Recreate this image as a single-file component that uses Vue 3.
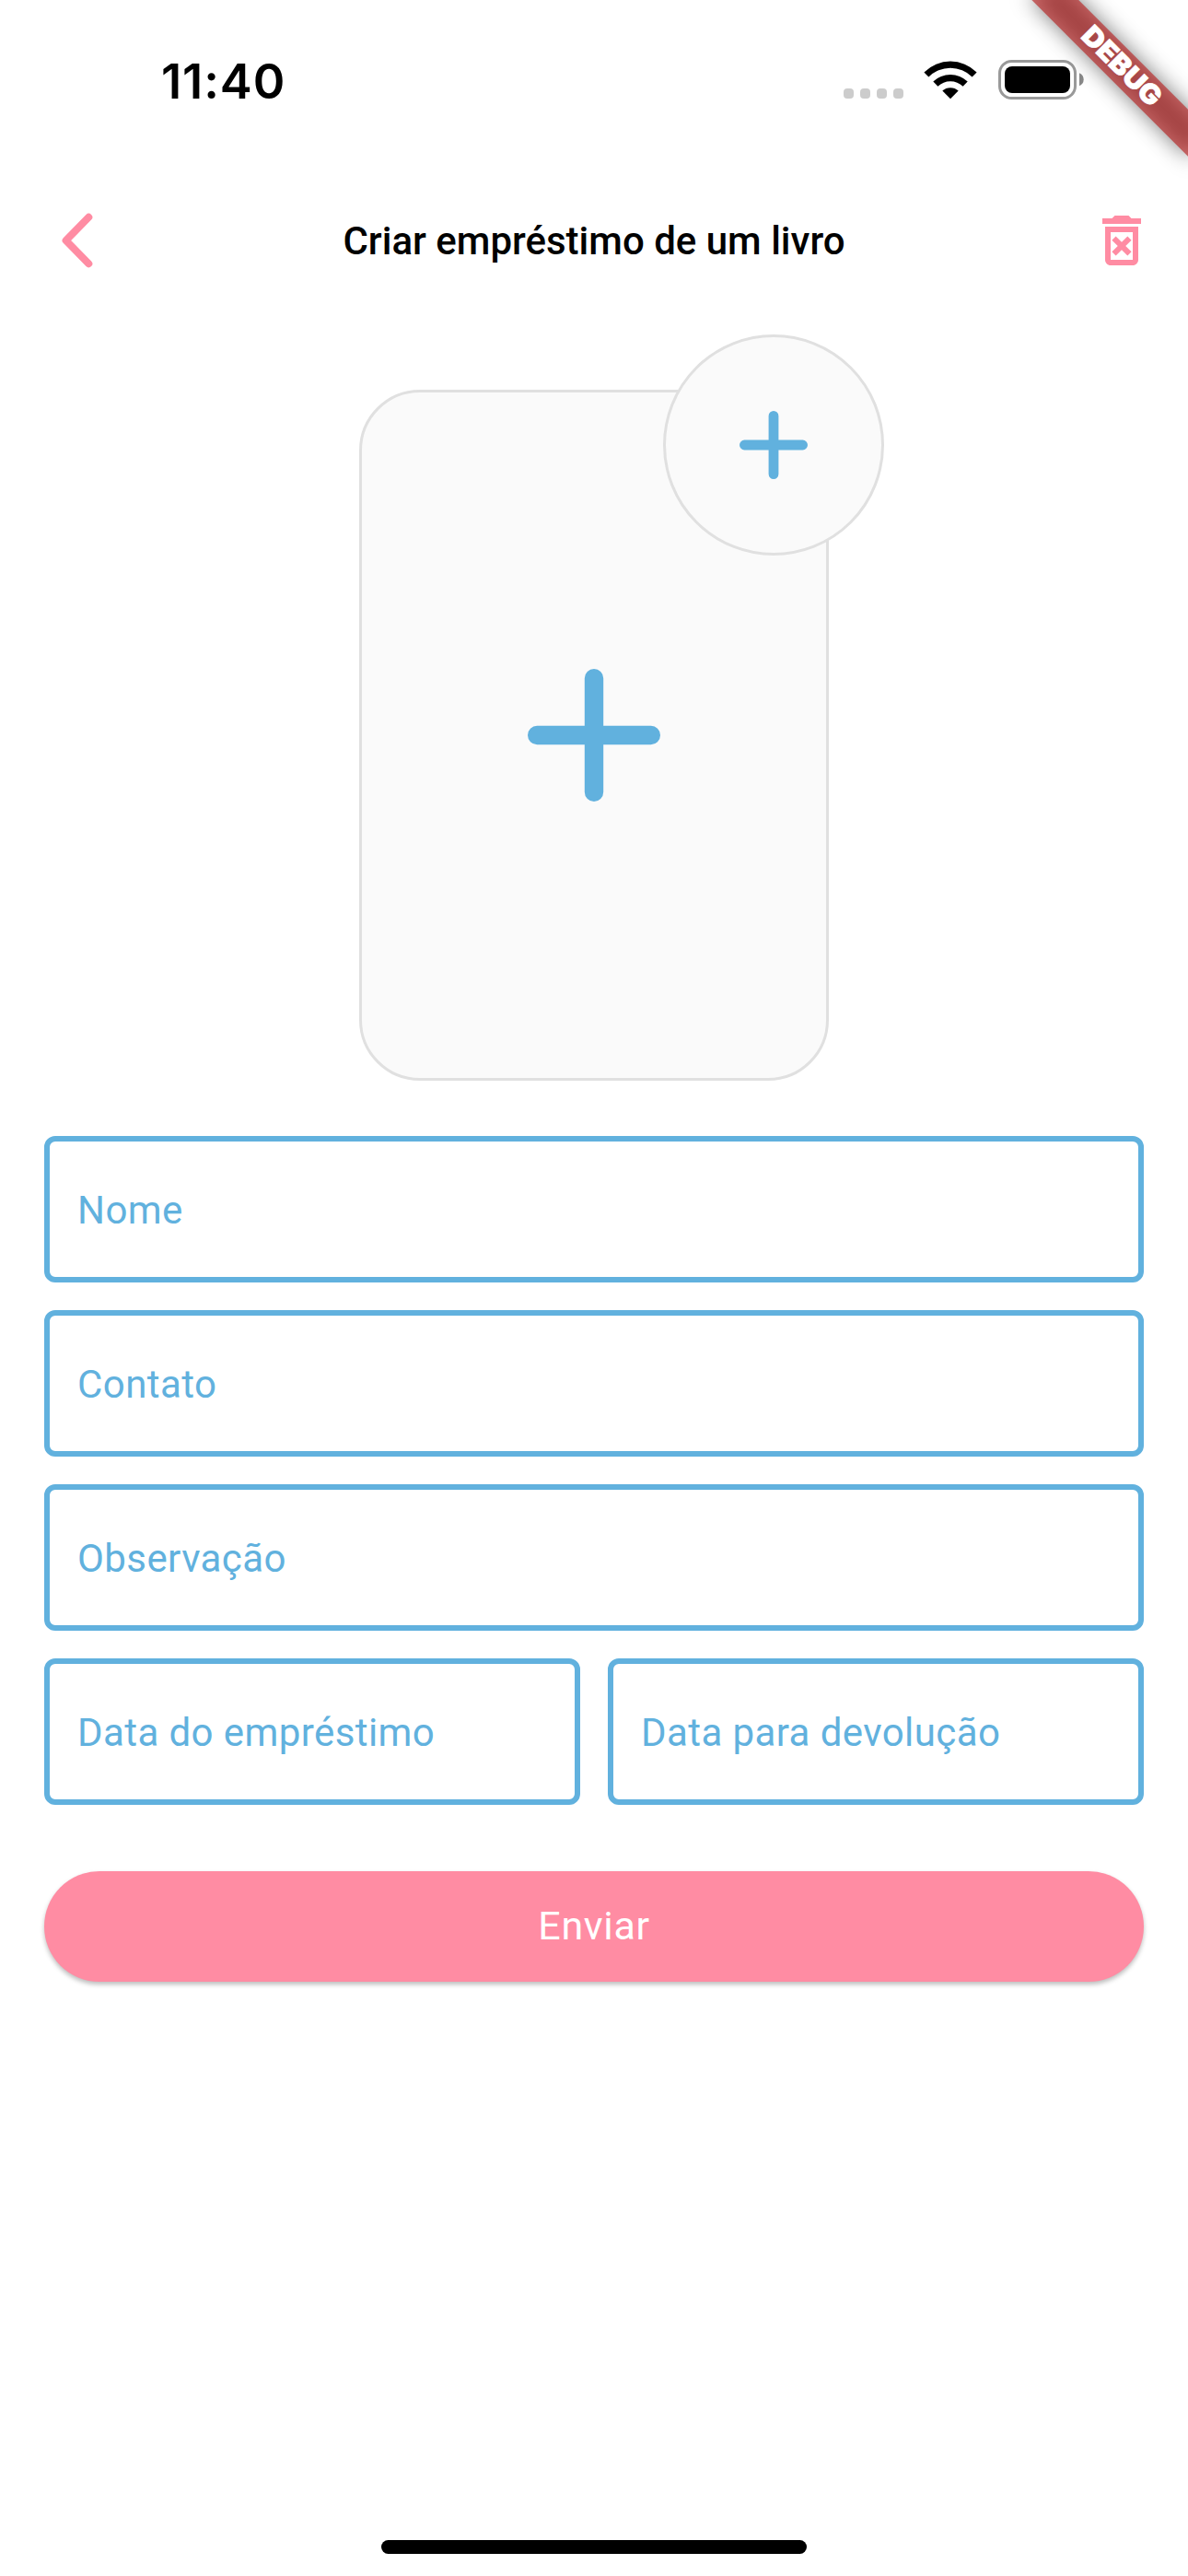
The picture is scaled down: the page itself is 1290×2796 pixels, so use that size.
<script setup>
const fields = ['Nome', 'Contato', 'Observação']
const dates = ['Data do empréstimo', 'Data para devolução']
</script>

<template>
  <main class="screen">
    <header class="status">
      <span class="time">11:40</span>
      <div class="indicators">
        <div class="signal"><i v-for="n in 4" :key="n"></i></div>
        <svg class="wifi" width="58" height="43" viewBox="0 0 58 43">
          <path d="M5.4 18.5 L0.4 13.4 A40.6 40.6 0 0 1 57.6 13.4 L52.6 18.5 A33.4 33.4 0 0 0 5.4 18.5Z" />
          <path d="M15.4 28.7 L10.3 23.6 A27 27 0 0 1 47.7 23.6 L42.6 28.7 A19.6 19.6 0 0 0 15.4 28.7Z" />
          <path d="M29 42.3 L20.3 33.5 A13 13 0 0 1 37.7 33.5Z" />
        </svg>
        <svg class="battery" width="93" height="43" viewBox="0 0 93 43">
          <rect x="1.5" y="1.5" width="82" height="40" rx="13" fill="none" stroke="#999" stroke-width="3" />
          <rect x="7" y="7" width="71" height="29" rx="8" />
          <path d="M88 14.3 A7.6 7.6 0 0 1 88 28.3Z" fill="#888" />
        </svg>
      </div>
    </header>

    <nav class="appbar">
      <svg class="back" width="72" height="72" viewBox="0 0 72 72">
        <path d="M48.3 10.8 L23.6 36 L48.3 61.2" />
      </svg>
      <h1>Criar empréstimo de um livro</h1>
      <svg class="trash" width="72" height="72" viewBox="0 0 24 24">
        <path d="M14.12 10.47L12 12.59l-2.13-2.12-1.41 1.41L10.59 14l-2.12 2.12 1.41 1.41L12 15.41l2.12 2.12 1.41-1.41L13.41 14l2.12-2.12zM15.5 4l-1-1h-5l-1 1H5v2h14V4zM6 19c0 1.1.9 2 2 2h8c1.1 0 2-.9 2-2V7H6v12zM8 9h8v10H8V9z" />
      </svg>
    </nav>

    <section class="cover">
      <svg width="144" height="144" viewBox="0 0 144 144">
        <path d="M72 10.2V133.8M10.2 72H133.8" stroke-width="20.4" />
      </svg>
      <div class="add">
        <svg width="74" height="74" viewBox="0 0 74 74">
          <path d="M37 5.4V68.6M5.4 37H68.6" stroke-width="10.8" />
        </svg>
      </div>
    </section>

    <form class="form" @submit.prevent>
      <div v-for="label in fields" :key="label" class="field">{{ label }}</div>
      <div class="row">
        <div v-for="label in dates" :key="label" class="field">{{ label }}</div>
      </div>
      <button class="send" type="submit">Enviar</button>
    </form>

    <div class="home"></div>

    <svg class="banner" width="220" height="220" viewBox="0 0 220 220">
      <defs>
        <filter id="soft" x="-60" y="20" width="440" height="180" filterUnits="userSpaceOnUse" primitiveUnits="userSpaceOnUse">
          <feGaussianBlur stdDeviation="11.9" />
        </filter>
      </defs>
      <g transform="translate(220 0) rotate(45)">
        <g transform="translate(-160 0)">
          <rect x="40" y="84" width="240" height="36" fill="#000" fill-opacity=".5" filter="url(#soft)" />
        </g>
        <rect x="-120" y="84" width="240" height="36" fill="#b71c1c" fill-opacity=".627" />
        <text x="0" y="111.8" text-anchor="middle" textLength="109" lengthAdjust="spacingAndGlyphs">DEBUG</text>
      </g>
    </svg>
  </main>
</template>

<style>
body {
  margin: 0;
  background: #fff;
}
</style>

<style scoped>
.screen {
  position: relative;
  display: flex;
  flex-direction: column;
  width: 1290px;
  height: 2796px;
  overflow: hidden;
  background: #fff;
  font-family: Roboto, "Liberation Sans", sans-serif;
}
.status {
  display: flex;
  justify-content: space-between;
  height: 177px;
  padding: 0 113px 0 175px;
}
.time {
  margin-top: 57px;
  font: 600 52.5px/62px Inter, sans-serif;
  letter-spacing: 0.9px;
  color: #000;
}
.indicators {
  display: flex;
  align-items: flex-start;
  padding-top: 65px;
}
.signal {
  display: flex;
  gap: 7px;
  margin: 31px 22px 0 0;
}
.signal i {
  width: 11px;
  height: 11px;
  border-radius: 4px;
  background: #ccc;
}
.battery {
  margin-left: 23px;
}
.appbar {
  display: flex;
  align-items: center;
  justify-content: space-between;
  height: 168px;
  padding: 0 36px 0 48px;
}
.back {
  fill: none;
  stroke: #ff8ca3;
  stroke-width: 8;
  stroke-linecap: round;
  stroke-linejoin: round;
}
.trash {
  fill: #ff8ca3;
}
h1 {
  margin: 2px 0 0 -12px;
  font-size: 42px;
  font-weight: 500;
  line-height: 50px;
  color: #000;
}
.cover {
  position: relative;
  display: flex;
  align-items: center;
  justify-content: center;
  box-sizing: border-box;
  width: 510px;
  height: 750px;
  margin: 78px auto 60px;
  border: 3px solid #e0e0e0;
  border-radius: 66px;
  background: #fafafa;
}
.cover svg {
  fill: none;
  stroke: #61b1de;
  stroke-linecap: round;
}
.add {
  position: absolute;
  top: -63px;
  right: -63px;
  display: flex;
  align-items: center;
  justify-content: center;
  box-sizing: border-box;
  width: 240px;
  height: 240px;
  border: 3px solid #e0e0e0;
  border-radius: 50%;
  background: #fafafa;
}
.form {
  display: flex;
  flex-direction: column;
  gap: 30px;
  padding: 0 48px;
}
.row {
  display: flex;
  gap: 30px;
}
.field {
  box-sizing: border-box;
  height: 159px;
  padding: 1px 30px 0;
  border: 6px solid #61b1de;
  border-radius: 12px;
  font-size: 42px;
  line-height: 147px;
  letter-spacing: 0.42px;
  color: #61b1de;
}
.row .field {
  flex: 1;
}
.send {
  height: 120px;
  margin-top: 42px;
  padding: 0 0 2px;
  border: 0;
  border-radius: 60px;
  background: #ff8ca3;
  box-shadow: 0 3px 5px rgba(0, 0, 0, 0.26);
  font-family: inherit;
  font-size: 43px;
  letter-spacing: 0.65px;
  color: #fff;
}
.home {
  width: 462px;
  height: 15px;
  margin: auto auto 24px;
  border-radius: 8px;
  background: #000;
}
.banner {
  position: absolute;
  top: 0;
  right: 0;
}
.banner text {
  font: 900 29.6px Inter, sans-serif;
  fill: #fff;
  stroke: #fff;
  stroke-width: 0.7px;
}
</style>
